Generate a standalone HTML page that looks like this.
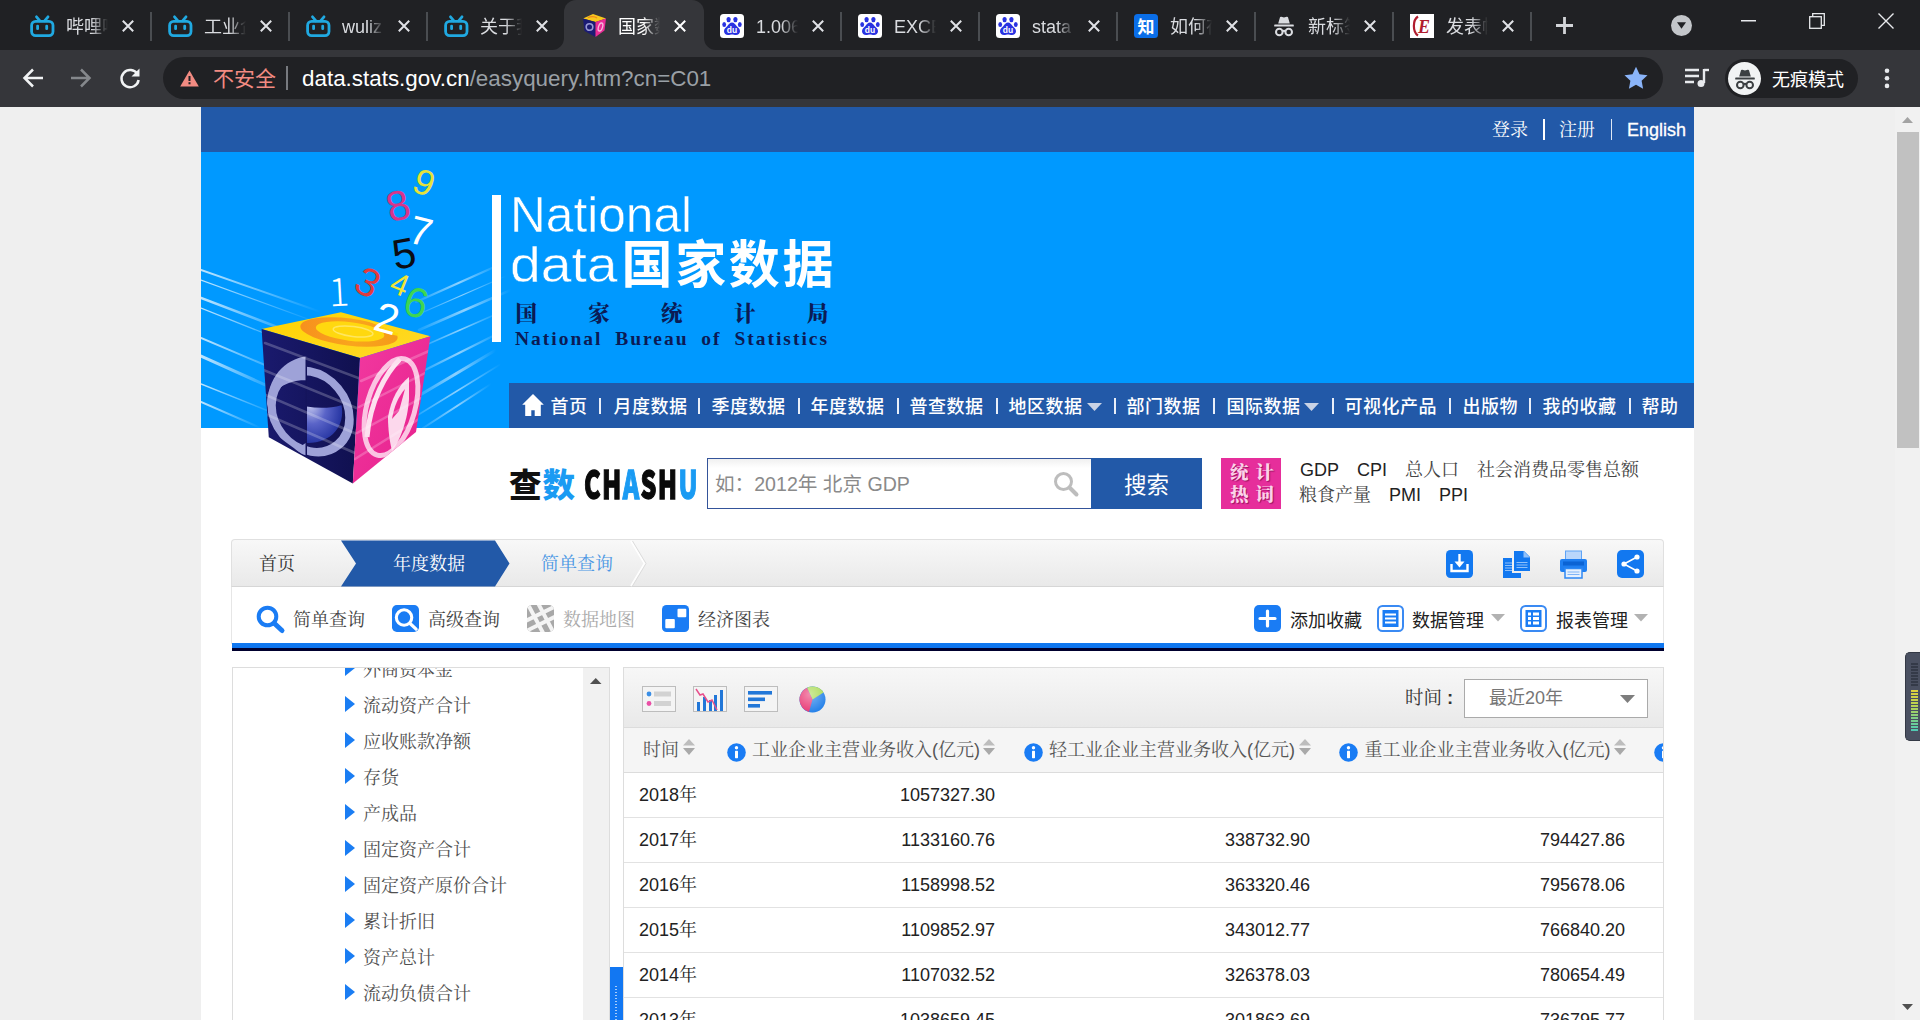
<!DOCTYPE html>
<html lang="zh-CN">
<head>
<meta charset="utf-8">
<title>国家数据</title>
<style>
*{box-sizing:border-box;margin:0;padding:0}
html,body{width:1920px;height:1020px;overflow:hidden;background:#efefef}
body{position:relative;font-family:"Liberation Sans","Noto Serif CJK SC",serif;font-size:18px;color:#333}
.abs{position:absolute}
.sans{font-family:"Liberation Sans","Noto Sans CJK SC",sans-serif}
.serif{font-family:"Liberation Sans","Noto Serif CJK SC",serif}
svg{position:absolute;overflow:visible}
span,div{white-space:nowrap}
i{font-style:normal}

/* ---------- browser chrome ---------- */
#tabstrip{left:0;top:0;width:1920px;height:50px;background:#202124}
#toolbar{left:0;top:50px;width:1920px;height:57px;background:#35363a}
.tab{position:absolute;top:0;height:50px;width:138px}
.tab .ttl{position:absolute;left:53px;top:13px;height:28px;width:42px;overflow:hidden;font:18px/28px "Liberation Sans","Noto Sans CJK SC",sans-serif;color:#dadce0;
  -webkit-mask-image:linear-gradient(90deg,#000 60%,transparent 100%);mask-image:linear-gradient(90deg,#000 60%,transparent 100%)}
.tab .sep{position:absolute;left:137px;top:12px;width:2px;height:29px;background:#4a4d51}
.tab svg.x{left:109px;top:20px}
.tab svg.fav{left:17px;top:14.500px}
#activetab{position:absolute;left:564px;top:0;width:140px;height:50px;background:#35363a;border-radius:12px 12px 0 0}
#omni{left:163px;top:57px;width:1500px;height:42px;border-radius:21px;background:#202124}
#incog{left:1725px;top:59px;width:133px;height:39px;border-radius:20px;background:#202124}

/* ---------- page ---------- */
#page{left:201px;top:107px;width:1493px;height:913px;background:#fff;overflow:hidden}
#topbar{left:0;top:0;width:1493px;height:45px;background:#2259a8;color:#fff}
#banner{left:0;top:45px;width:1493px;height:276px;background:#0099ff;overflow:hidden}
#nav{left:308px;top:276px;width:1185px;height:45px;background:#2259a8}
#nav span{position:absolute;top:2px;font:500 18px/45px "Liberation Sans","Noto Sans CJK SC",sans-serif;color:#fff;letter-spacing:.5px;margin-left:-.5px}
#nav i{position:absolute;top:15px;width:2px;height:16px;background:#e8eef8;margin-left:.7px}
.hot span{position:absolute;font-size:18px;line-height:24px}
.tb span{position:absolute;top:0;line-height:56px;font-size:18px;color:#444}
.tree .it{position:absolute;font-size:18px;line-height:36px;color:#505050;height:36px}
.tree .it:before{content:"";position:absolute;left:-18px;top:8.500px;border-left:10px solid #1a7df3;border-top:8px solid transparent;border-bottom:8px solid transparent}
.th{position:absolute;top:0;font-size:18px;line-height:45px;color:#555}
.row{position:absolute;left:0;width:1040px;height:45px;border-bottom:1px solid #e2e2e2;font:18px/45px "Liberation Sans","Noto Serif CJK SC",serif;color:#222}
.row span{position:absolute;top:0}
.row .c0{left:15px}
.row .c1{right:669px}
.row .c2{right:354px}
.row .c3{right:39px}
</style>
</head>
<body>
<!-- ================= BROWSER CHROME ================= -->
<div id="tabstrip" class="abs">
<div id="activetab"></div>
<svg style="left:552px;top:38px" width="12" height="12"><path d="M12 0v12H0A12 12 0 0 0 12 0z" fill="#35363a"/></svg>
<svg style="left:704px;top:38px" width="12" height="12"><path d="M0 0v12h12A12 12 0 0 1 0 0z" fill="#35363a"/></svg>
<div class="tab" style="left:13px"><svg class="fav" width="25" height="24" viewBox="0 0 25 24"><g fill="none" stroke="#20a9e1" stroke-width="2.8" stroke-linecap="round" stroke-linejoin="round"><rect x="1.600" y="6.400" width="21.400" height="14.200" rx="4"/><path d="M6.500 1.800l3.400 4M18 1.800l-3.400 4"/></g><g fill="#20a9e1"><rect x="6.200" y="9.800" width="2.800" height="5.200" rx="1.300"/><rect x="15.300" y="9.800" width="2.800" height="5.200" rx="1.300"/></g></svg><div class="ttl">哔哩哔哩</div><svg class="x" width="12" height="12" viewBox="0 0 12 12"><path d="M.8.800l10.400 10.400M11.200.800L.8 11.200" stroke="#e0e2e6" stroke-width="2" fill="none"/></svg><div class="sep"></div></div>
<div class="tab" style="left:151px"><svg class="fav" width="25" height="24" viewBox="0 0 25 24"><g fill="none" stroke="#20a9e1" stroke-width="2.8" stroke-linecap="round" stroke-linejoin="round"><rect x="1.600" y="6.400" width="21.400" height="14.200" rx="4"/><path d="M6.500 1.800l3.400 4M18 1.800l-3.400 4"/></g><g fill="#20a9e1"><rect x="6.200" y="9.800" width="2.800" height="5.200" rx="1.300"/><rect x="15.300" y="9.800" width="2.800" height="5.200" rx="1.300"/></g></svg><div class="ttl">工业企业</div><svg class="x" width="12" height="12" viewBox="0 0 12 12"><path d="M.8.800l10.400 10.400M11.200.800L.8 11.200" stroke="#e0e2e6" stroke-width="2" fill="none"/></svg><div class="sep"></div></div>
<div class="tab" style="left:289px"><svg class="fav" width="25" height="24" viewBox="0 0 25 24"><g fill="none" stroke="#20a9e1" stroke-width="2.8" stroke-linecap="round" stroke-linejoin="round"><rect x="1.600" y="6.400" width="21.400" height="14.200" rx="4"/><path d="M6.500 1.800l3.400 4M18 1.800l-3.400 4"/></g><g fill="#20a9e1"><rect x="6.200" y="9.800" width="2.800" height="5.200" rx="1.300"/><rect x="15.300" y="9.800" width="2.800" height="5.200" rx="1.300"/></g></svg><div class="ttl">wuliz</div><svg class="x" width="12" height="12" viewBox="0 0 12 12"><path d="M.8.800l10.400 10.400M11.200.800L.8 11.200" stroke="#e0e2e6" stroke-width="2" fill="none"/></svg><div class="sep"></div></div>
<div class="tab" style="left:427px"><svg class="fav" width="25" height="24" viewBox="0 0 25 24"><g fill="none" stroke="#20a9e1" stroke-width="2.8" stroke-linecap="round" stroke-linejoin="round"><rect x="1.600" y="6.400" width="21.400" height="14.200" rx="4"/><path d="M6.500 1.800l3.400 4M18 1.800l-3.400 4"/></g><g fill="#20a9e1"><rect x="6.200" y="9.800" width="2.800" height="5.200" rx="1.300"/><rect x="15.300" y="9.800" width="2.800" height="5.200" rx="1.300"/></g></svg><div class="ttl">关于我</div><svg class="x" width="12" height="12" viewBox="0 0 12 12"><path d="M.8.800l10.400 10.400M11.200.800L.8 11.200" stroke="#e0e2e6" stroke-width="2" fill="none"/></svg></div>
<div class="tab" style="left:565px"><svg class="fav" style="left:17px;top:13px" width="25" height="25" viewBox="0 0 25 25"><path d="M1 5.500L11 1l13 4.500L13.500 9z" fill="#f7c81e"/><path d="M1 5.500l12.500 3.500v15L2.500 18z" fill="#1b1b74"/><path d="M13.500 9L24 5.500l-1.500 12-9 6.500z" fill="#e92b97"/><circle cx="7.500" cy="14" r="3.300" fill="none" stroke="#9a9ad6" stroke-width="1.600"/><ellipse cx="18.500" cy="14" rx="2" ry="4.200" fill="none" stroke="#f8b6dc" stroke-width="1.400" transform="rotate(18 18.500 14)"/><path d="M6 4.800c2-1.500 7-1.500 9 .3" stroke="#f08a1c" stroke-width="1.300" fill="none"/></svg><div class="ttl" style="color:#fff">国家数据</div><svg class="x" width="12" height="12" viewBox="0 0 12 12"><path d="M.8.800l10.400 10.400M11.200.800L.8 11.200" stroke="#ffffff" stroke-width="2" fill="none"/></svg></div>
<div class="tab" style="left:703px"><svg class="fav" style="left:17px;top:14px" width="24" height="24" viewBox="0 0 24 24"><rect width="24" height="24" rx="3.5" fill="#fff"/><g fill="#2932e1"><ellipse cx="8.6" cy="5.6" rx="2.1" ry="2.7"/><ellipse cx="15.4" cy="5.6" rx="2.1" ry="2.7"/><ellipse cx="4.2" cy="10.4" rx="1.9" ry="2.5"/><ellipse cx="19.8" cy="10.4" rx="1.9" ry="2.5"/><path d="M12 8.6c2.2 0 3.2 2 4.8 3.6 1.8 1.8 3.2 2.8 3.2 5 0 2.4-1.8 3.8-4 3.8-1.6 0-2.6-.5-4-.5s-2.400.5-4 .5c-2.200 0-4-1.400-4-3.800 0-2.200 1.400-3.200 3.200-5 1.600-1.600 2.600-3.600 4.800-3.600z"/></g><text x="12" y="19.3" font-family="Liberation Sans,sans-serif" font-weight="bold" font-size="8.5" text-anchor="middle" fill="#fff">du</text></svg><div class="ttl">1.0066</div><svg class="x" width="12" height="12" viewBox="0 0 12 12"><path d="M.8.800l10.400 10.400M11.200.800L.8 11.200" stroke="#e0e2e6" stroke-width="2" fill="none"/></svg><div class="sep"></div></div>
<div class="tab" style="left:841px"><svg class="fav" style="left:17px;top:14px" width="24" height="24" viewBox="0 0 24 24"><rect width="24" height="24" rx="3.5" fill="#fff"/><g fill="#2932e1"><ellipse cx="8.6" cy="5.6" rx="2.1" ry="2.7"/><ellipse cx="15.4" cy="5.6" rx="2.1" ry="2.7"/><ellipse cx="4.2" cy="10.4" rx="1.9" ry="2.5"/><ellipse cx="19.8" cy="10.4" rx="1.9" ry="2.5"/><path d="M12 8.6c2.2 0 3.2 2 4.8 3.6 1.8 1.8 3.2 2.8 3.2 5 0 2.4-1.8 3.8-4 3.8-1.6 0-2.6-.5-4-.5s-2.400.5-4 .5c-2.200 0-4-1.400-4-3.800 0-2.200 1.400-3.200 3.200-5 1.600-1.600 2.600-3.600 4.800-3.600z"/></g><text x="12" y="19.3" font-family="Liberation Sans,sans-serif" font-weight="bold" font-size="8.5" text-anchor="middle" fill="#fff">du</text></svg><div class="ttl">EXCEL</div><svg class="x" width="12" height="12" viewBox="0 0 12 12"><path d="M.8.800l10.400 10.400M11.200.800L.8 11.200" stroke="#e0e2e6" stroke-width="2" fill="none"/></svg><div class="sep"></div></div>
<div class="tab" style="left:979px"><svg class="fav" style="left:17px;top:14px" width="24" height="24" viewBox="0 0 24 24"><rect width="24" height="24" rx="3.5" fill="#fff"/><g fill="#2932e1"><ellipse cx="8.6" cy="5.6" rx="2.1" ry="2.7"/><ellipse cx="15.4" cy="5.6" rx="2.1" ry="2.7"/><ellipse cx="4.2" cy="10.4" rx="1.9" ry="2.5"/><ellipse cx="19.8" cy="10.4" rx="1.9" ry="2.5"/><path d="M12 8.6c2.2 0 3.2 2 4.8 3.6 1.8 1.8 3.2 2.8 3.2 5 0 2.4-1.8 3.8-4 3.8-1.6 0-2.6-.5-4-.5s-2.400.5-4 .5c-2.200 0-4-1.400-4-3.800 0-2.200 1.400-3.200 3.200-5 1.600-1.600 2.600-3.600 4.800-3.600z"/></g><text x="12" y="19.3" font-family="Liberation Sans,sans-serif" font-weight="bold" font-size="8.5" text-anchor="middle" fill="#fff">du</text></svg><div class="ttl">stata</div><svg class="x" width="12" height="12" viewBox="0 0 12 12"><path d="M.8.800l10.400 10.400M11.200.800L.8 11.200" stroke="#e0e2e6" stroke-width="2" fill="none"/></svg><div class="sep"></div></div>
<div class="tab" style="left:1117px"><svg class="fav" style="left:17px;top:14px" width="24" height="24" viewBox="0 0 24 24"><rect width="24" height="24" rx="3.5" fill="#0a6ee8"/><text x="12" y="18.6" font-family="Liberation Sans,Noto Sans CJK SC,sans-serif" font-weight="bold" font-size="17" text-anchor="middle" fill="#fff">知</text></svg><div class="ttl">如何在</div><svg class="x" width="12" height="12" viewBox="0 0 12 12"><path d="M.8.800l10.400 10.400M11.200.800L.8 11.200" stroke="#e0e2e6" stroke-width="2" fill="none"/></svg><div class="sep"></div></div>
<div class="tab" style="left:1255px"><svg class="fav" style="left:16px;top:14px" width="26" height="24" viewBox="0 0 26 24"><g fill="#dadce0"><path d="M7.200 9.500l1.800-6.200c.2-.6.700-.8 1.300-.6l2.700.9 2.700-.9c.6-.2 1.100 0 1.300.6l1.800 6.200z"/><rect x="3.200" y="10.400" width="19.600" height="2.200" rx=".6"/></g><g fill="none" stroke="#dadce0" stroke-width="2"><circle cx="8.300" cy="18" r="3.300"/><circle cx="17.700" cy="18" r="3.300"/><path d="M11.500 17.400c1-.8 2-.8 3 0"/></g></svg><div class="ttl">新标签页</div><svg class="x" width="12" height="12" viewBox="0 0 12 12"><path d="M.8.800l10.400 10.400M11.200.800L.8 11.200" stroke="#e0e2e6" stroke-width="2" fill="none"/></svg><div class="sep"></div></div>
<div class="tab" style="left:1393px"><svg class="fav" style="left:17px;top:14px" width="24" height="24" viewBox="0 0 24 24"><rect width="24" height="24" fill="#fff"/><path d="M8 2.500C2.500 6 2.500 18 8 21.500" fill="none" stroke="#b01c2e" stroke-width="2.200"/><text x="14" y="18.500" font-family="Liberation Serif,serif" font-style="italic" font-weight="bold" font-size="18" text-anchor="middle" fill="#b01c2e">E</text></svg><div class="ttl">发表帖子</div><svg class="x" width="12" height="12" viewBox="0 0 12 12"><path d="M.8.800l10.400 10.400M11.200.800L.8 11.200" stroke="#e0e2e6" stroke-width="2" fill="none"/></svg><div class="sep"></div></div>
<svg style="left:1555px;top:16px" width="19" height="19" viewBox="0 0 19 19"><path d="M9.500 1v17M1 9.500h17" stroke="#d2d4d8" stroke-width="2.800" fill="none"/></svg>
<svg style="left:1671px;top:15px" width="21" height="21" viewBox="0 0 21 21"><circle cx="10.500" cy="10.500" r="10.500" fill="#c3c6ca"/><path d="M6 7.300h9l-4.500 6.400z" fill="#202124"/></svg>
<svg style="left:1741px;top:20px" width="15" height="2"><rect width="15" height="1.500" fill="#e8eaed"/></svg>
<svg style="left:1809px;top:13px" width="16" height="16" viewBox="0 0 16 16"><g fill="none" stroke="#e8eaed" stroke-width="1.300"><rect x=".7" y="3.700" width="11.600" height="11.600"/><path d="M3.700 3.700V.7h11.600v11.600h-3"/></g></svg>
<svg style="left:1878px;top:13px" width="16" height="16" viewBox="0 0 16 16"><path d="M.5.500l15 15M15.500.500l-15 15" stroke="#e8eaed" stroke-width="1.400" fill="none"/></svg>
</div>
<div id="toolbar" class="abs">
<svg style="left:22px;top:17px" width="22" height="22" viewBox="0 0 22 22"><path d="M21 11H3M11 2.500L2.500 11l8.500 8.500" stroke="#f1f3f4" stroke-width="2.500" fill="none"/></svg>
<svg style="left:70px;top:17px" width="22" height="22" viewBox="0 0 22 22"><path d="M1 11h18M11 2.500l8.500 8.500-8.500 8.500" stroke="#85888c" stroke-width="2.500" fill="none"/></svg>
<svg style="left:118px;top:16px" width="24" height="24" viewBox="0 0 24 24"><path d="M19.500 8.200A8.600 8.600 0 1 0 20.600 14" stroke="#f1f3f4" stroke-width="2.500" fill="none"/><path d="M21.500 2.500v8h-8z" fill="#f1f3f4"/></svg>
</div>
<div id="omni" class="abs">
<svg style="left:17px;top:13px" width="19" height="17" viewBox="0 0 19 17"><path d="M9.500.500L18.800 16.500H.2z" fill="#f28b82"/><rect x="8.500" y="6" width="2" height="5" fill="#202124"/><rect x="8.500" y="12.200" width="2" height="2.100" fill="#202124"/></svg>
<span class="abs sans" style="left:50px;top:1px;font-size:21px;line-height:41px;color:#f28b82">不安全</span>
<div class="abs" style="left:123px;top:9px;width:2px;height:24px;background:#777a7f"></div>
<span class="abs sans" style="left:139px;top:.500px;font-size:22.400px;line-height:41px;color:#fff">data.stats.gov.cn<i style="color:#9aa0a6">/easyquery.htm?cn=C01</i></span>
<svg style="left:1461px;top:9px" width="24" height="23" viewBox="0 0 24 23"><path d="M12 .8l3.500 7.400 8 1-5.900 5.500 1.500 8L12 18.800 4.900 22.700l1.500-8L.5 9.200l8-1z" fill="#8ab4f8"/></svg>
</div>
<svg style="left:1685px;top:67px" width="24" height="22" viewBox="0 0 24 22"><g stroke="#e8eaed" stroke-width="2.400" fill="none"><path d="M0 3h14M0 9h14M0 15h9"/><path d="M19 2v14"/><path d="M19 3h5"/></g><circle cx="16" cy="16.500" r="3.500" fill="#e8eaed"/></svg>
<div id="incog" class="abs"><div class="abs" style="left:3px;top:3px;width:33px;height:33px;border-radius:50%;background:#f1f3f4"></div>
<svg style="left:6.500px;top:7.500px" width="26" height="24" viewBox="0 0 26 24"><g fill="#3c4043"><path d="M7.200 9.500l1.800-6.200c.2-.6.700-.8 1.300-.6l2.700.9 2.700-.9c.6-.2 1.100 0 1.300.6l1.800 6.200z"/><rect x="3.200" y="10.400" width="19.600" height="2.200" rx=".6"/></g><g fill="none" stroke="#3c4043" stroke-width="2"><circle cx="8.300" cy="18" r="3.300"/><circle cx="17.700" cy="18" r="3.300"/><path d="M11.500 17.400c1-.8 2-.8 3 0"/></g></svg>
<span class="abs sans" style="left:47px;top:2px;font-size:18px;line-height:39px;color:#fff">无痕模式</span></div>
<svg style="left:1884px;top:68px" width="6" height="21" viewBox="0 0 6 21"><g fill="#e8eaed"><circle cx="3" cy="2.700" r="2.300"/><circle cx="3" cy="10.300" r="2.300"/><circle cx="3" cy="17.900" r="2.300"/></g></svg>
<!-- ================= PAGE ================= -->
<div id="page" class="abs">
  <div id="topbar" class="abs serif">
    <span class="abs" style="left:1291px;top:.500px;line-height:45px">登录</span>
    <div class="abs" style="left:1342px;top:12px;width:2px;height:21px;background:#fff"></div>
    <span class="abs" style="left:1358px;top:.500px;line-height:45px">注册</span>
    <div class="abs" style="left:1410px;top:12px;width:1px;height:21px;background:#dfe8f5"></div>
    <span class="abs" style="left:1426px;top:.500px;line-height:45px;-webkit-text-stroke:.3px #fff">English</span>
  </div>

  <div id="banner" class="abs">
    <!-- light streaks -->
    <svg style="left:0;top:0" width="640" height="276" viewBox="0 0 640 276">
      <defs>
        <linearGradient id="sl" x1="0" y1="0" x2="1" y2="0"><stop offset="0" stop-color="#fff" stop-opacity=".75"/><stop offset="1" stop-color="#fff" stop-opacity="0"/></linearGradient>
        <linearGradient id="sr" x1="1" y1="0" x2="0" y2="0"><stop offset="0" stop-color="#fff" stop-opacity="0"/><stop offset=".5" stop-color="#fff" stop-opacity=".55"/><stop offset="1" stop-color="#fff" stop-opacity=".1"/></linearGradient>
      </defs>
      <g fill="none" stroke="url(#sl)" stroke-linecap="round">
        <path d="M0 118L120 160" stroke-width="2"/>
        <path d="M0 128L115 170" stroke-width="1.200"/>
        <path d="M0 146L105 186" stroke-width="2.500"/>
        <path d="M0 156L100 196" stroke-width="1.200"/>
        <path d="M0 186L90 224" stroke-width="2"/>
        <path d="M0 204L80 240" stroke-width="3"/>
        <path d="M0 232L75 262" stroke-width="1.500"/>
        <path d="M0 250L60 276" stroke-width="2"/>
      </g>
      <g fill="none" stroke="url(#sr)" stroke-linecap="round">
        <path d="M215 150L300 112" stroke-width="2"/>
        <path d="M218 162L305 124" stroke-width="1.200"/>
        <path d="M218 178L310 138" stroke-width="2.500"/>
        <path d="M218 196L300 160" stroke-width="1.500"/>
        <path d="M216 222L300 180" stroke-width="2"/>
        <path d="M214 246L295 198" stroke-width="3"/>
        <path d="M212 266L300 212" stroke-width="1.500"/>
        <path d="M222 276L290 232" stroke-width="2"/>
      </g>
    </svg>
    <!-- title -->
    <div class="abs" style="left:291px;top:43px;width:9px;height:147px;background:#fff"></div>
    <svg style="left:0;top:0" width="700" height="276" viewBox="0 0 700 276">
      <g font-family="Liberation Sans, sans-serif" fill="#fff" stroke="#0099ff" stroke-width=".500">
        <text x="309" y="79.500" font-size="50.500" textLength="182" lengthAdjust="spacingAndGlyphs">National</text>
        <text x="309" y="130" font-size="50.500" textLength="107.500" lengthAdjust="spacingAndGlyphs">data</text>
      </g>
      <text x="420.500" y="131" font-family="Liberation Sans, Noto Sans CJK SC, sans-serif" font-weight="bold" font-size="51" fill="#fff" textLength="212" lengthAdjust="spacing">国家数据</text>
      <text x="314.500" y="169" font-family="Liberation Serif, Noto Serif CJK SC, serif" font-weight="900" font-size="21.500" fill="#0b1b55" letter-spacing="51.300">国家统计局</text>
      <text x="314" y="192.500" font-family="Liberation Serif, serif" font-weight="bold" font-size="19.500" fill="#0b1b55" textLength="312" lengthAdjust="spacing" word-spacing="6">National Bureau of Statistics</text>
    </svg>
  </div>

  <div id="nav" class="abs">
    <svg style="left:13px;top:11px" width="22" height="22" viewBox="0 0 22 22"><path d="M11 0L.2 10.800h3V22h6.100v-5.800h3.400V22h6.100V10.800h3z" fill="#fff"/></svg>
    <span style="left:42px">首页</span><i style="left:89px"></i>
    <span style="left:105px">月度数据</span><i style="left:188px"></i>
    <span style="left:203px">季度数据</span><i style="left:288px"></i>
    <span style="left:302px">年度数据</span><i style="left:387px"></i>
    <span style="left:401px">普查数据</span><i style="left:486px"></i>
    <span style="left:500px">地区数据</span>
    <svg style="left:578px;top:20px" width="15" height="8"><path d="M0 0h15l-7.500 8z" fill="#c9d3e6"/></svg><i style="left:604px"></i>
    <span style="left:618px">部门数据</span><i style="left:703px"></i>
    <span style="left:718px">国际数据</span>
    <svg style="left:795px;top:20px" width="15" height="8"><path d="M0 0h15l-7.500 8z" fill="#c9d3e6"/></svg><i style="left:822px"></i>
    <span style="left:836px">可视化产品</span><i style="left:939px"></i>
    <span style="left:954px">出版物</span><i style="left:1019px"></i>
    <span style="left:1034px">我的收藏</span><i style="left:1119px"></i>
    <span style="left:1133px">帮助</span>
  </div>
  <!-- cube logo -->
  <svg style="left:0;top:45px" width="320" height="360" viewBox="0 45 320 360">
    <defs>
      <linearGradient id="gTop" x1="0" y1="0" x2="1" y2="1"><stop offset="0" stop-color="#ffd400"/><stop offset="1" stop-color="#ffd92a"/></linearGradient>
      <linearGradient id="gL" x1="0" y1="0" x2="1" y2="0"><stop offset="0" stop-color="#1a1a6e"/><stop offset="1" stop-color="#10104f"/></linearGradient>
      <linearGradient id="gR" x1="0" y1="0" x2="1" y2="1"><stop offset="0" stop-color="#f23aa0"/><stop offset="1" stop-color="#e61f8c"/></linearGradient>
      <linearGradient id="gRing" x1="0" y1="0" x2="1" y2="0"><stop offset="0" stop-color="#f7901e"/><stop offset=".55" stop-color="#f9a51c"/><stop offset="1" stop-color="#f59a1a"/></linearGradient>
      <radialGradient id="gPie" cx="0.1" cy="0.1" r="1"><stop offset="0" stop-color="#c9ccf0"/><stop offset=".45" stop-color="#5a64c8"/><stop offset="1" stop-color="#1a2a9a"/></radialGradient>
      <clipPath id="cL"><path d="M60.600 222.100L159 251l-7.200 125.500L67.800 330.200z"/></clipPath>
      <clipPath id="cR"><path d="M159 251l70.400-21.700L215 325l-63.200 51.500z"/></clipPath>
      <clipPath id="cT"><path d="M60.600 222.100l79.300-16.900 89.500 24.100L159 251z"/></clipPath>
    </defs>
    <!-- top face -->
    <path d="M60.600 222.100l79.300-16.900 89.500 24.100L159 251z" fill="url(#gTop)"/>
    <g clip-path="url(#cT)" transform="rotate(7 148 225)">
      <ellipse cx="148" cy="225" rx="49" ry="13.500" fill="url(#gRing)"/>
      <ellipse cx="149" cy="224.300" rx="34.500" ry="9.300" fill="#ffd80f"/>
      <ellipse cx="152" cy="224" rx="20" ry="5" fill="none" stroke="#ffe869" stroke-width="1.500" opacity=".9"/>
      <path d="M178 214l22 2-4 7-16-2z" fill="#ffd60a"/>
    </g>
    <!-- left face -->
    <path d="M60.600 222.100L159 251l-7.200 125.500L67.800 330.200z" fill="url(#gL)"/>
    <g clip-path="url(#cL)" transform="matrix(1 .18 0 1 0 -19.600)">
      <ellipse cx="109.500" cy="304.500" rx="39" ry="40" fill="none" stroke="#9ea2d8" stroke-width="8.500"/>
      <path d="M105.500 250C84 256 66 278 66 308c5-18 19-31 39.500-34z" fill="#9ea2d8"/>
      <path d="M105.500 300c12 0 24-2.500 35-7.500 4 20-10 40-35 44z" fill="url(#gPie)"/>
      <path d="M105.500 336v13c-3 0-8-1-12-3z" fill="#9ea2d8"/>
      <rect x="104.500" y="250" width="1.500" height="100" fill="#14145c"/>
    </g>
    <!-- right face -->
    <path d="M159 251l70.400-21.700L215 325l-63.200 51.500z" fill="url(#gR)"/>
    <g clip-path="url(#cR)" fill="none">
      <ellipse cx="190" cy="300" rx="24" ry="50" stroke="#fbc4e2" stroke-width="5" transform="rotate(16 190 300)"/>
      <path d="M199 252c-14 14-30 42-33 78" stroke="#fde0ef" stroke-width="5"/>
      <path d="M208 270c-10 8-18 22-21 40 0 14 2 26 4 34 8-10 16-32 17-52z" fill="#fde7f3" stroke="none" opacity=".92"/>
      <path d="M204 282c-7 8-11 18-13 30l7-8z" fill="#ee2d96" stroke="none"/>
    </g>
    <!-- streaks over cube -->
    <g fill="none" stroke="#fff" stroke-linecap="round" opacity=".22">
      <g clip-path="url(#cL)"><path d="M60 262l98 40M60 286l98 42M62 306l92 40M64 236l96 36" stroke-width="2.500"/></g>
      <g clip-path="url(#cR)"><path d="M158 300l70-36M156 326l66-36M154 352l64-40M160 274l68-30" stroke-width="2.500"/></g>
    </g>
    <!-- numbers -->
    <g font-family="Liberation Sans, sans-serif" text-anchor="middle">
      <g>
        <text x="223" y="88" font-size="36" fill="#e6e23a" transform="rotate(22 223 76)">9</text>
        <text x="197" y="113" font-size="42" fill="#d8348a" transform="rotate(-14 197 98)">8</text>
        <text x="220" y="138" font-size="40" fill="#fff" transform="rotate(14 220 124)">7</text>
        <text x="203" y="161" font-size="42" fill="#0c0c14" transform="rotate(-10 203 146)">5</text>
        <text x="167" y="189" font-size="40" fill="#e23a3e" transform="rotate(28 167 175)">3</text>
        <text x="199" y="188" font-size="31" fill="#f2e534" transform="rotate(22 199 177)">4</text>
        <text x="138" y="199" font-size="38" font-family="Noto Sans CJK SC, sans-serif" font-weight="300" fill="#fff" transform="rotate(-3 138 185)">1</text>
        <text x="215" y="210" font-size="42" fill="#3fd552" transform="rotate(16 215 196)">6</text>
      </g>
      <text x="186" y="226" font-size="42" fill="#fff" transform="rotate(16 186 211)">2</text>
    </g>
  </svg>
  <!-- search row -->
  <div class="abs sans" style="left:308px;top:356px;font-size:32.500px;line-height:46px;font-weight:900;color:#111;letter-spacing:1px">查<i style="color:#1a9bf3">数</i></div>
  <div class="abs" style="left:383px;top:359.500px;font:900 25px/30px 'Noto Sans CJK SC',sans-serif;color:#0a0a0a;transform-origin:0 50%;transform:scale(1,1.58);letter-spacing:1.300px;-webkit-text-stroke:.8px">CH<i style="color:#1a9bf3">A</i>SH<i style="color:#1a9bf3">U</i></div>
  <div class="abs" style="left:506px;top:351px;width:386px;height:51px;border:1px solid #34549a;background:linear-gradient(#f0f0f0,#fff 9px)"></div>
  <span class="abs sans" style="left:514px;top:352px;font-size:19.600px;line-height:50px;color:#8a8a8a">如：2012年 北京 GDP</span>
  <svg style="left:852px;top:364px" width="26" height="26" viewBox="0 0 26 26"><g fill="none" stroke="#bdbdbd" stroke-linecap="round"><circle cx="10.500" cy="10.500" r="8" stroke-width="3"/><path d="M17 17l6.500 6.500" stroke-width="4"/></g></svg>
  <div class="abs sans" style="left:890px;top:351px;width:111px;height:51px;background:#2259a8;color:#fff;font-size:22.500px;line-height:56px;text-align:center">搜索</div>
  <div class="abs" style="left:1020px;top:351px;width:60px;height:51px;background:#e62e9b"></div>
  <div class="abs serif" style="left:1029px;top:355px;font-size:18.500px;line-height:22px;font-weight:900;color:#fbd3ea;letter-spacing:7px;text-shadow:1px 1px 1px rgba(90,0,50,.55)">统计<br>热词</div>
  <div class="hot serif">
    <span style="left:1099px;top:351px;color:#222">GDP</span>
    <span style="left:1156px;top:351px;color:#222">CPI</span>
    <span style="left:1204px;top:351px;color:#444">总人口</span>
    <span style="left:1276px;top:351px;color:#444">社会消费品零售总额</span>
    <span style="left:1098px;top:376px;color:#444">粮食产量</span>
    <span style="left:1188px;top:376px;color:#222">PMI</span>
    <span style="left:1238px;top:376px;color:#222">PPI</span>
  </div>

  <!-- breadcrumb -->
  <div class="abs" style="left:30px;top:432px;width:1433px;height:48px;border:1px solid #e0e0e0;border-bottom-color:#d6d6d6;border-radius:4px 4px 0 0;background:linear-gradient(#f8f8f8,#e9e9e9)"></div>
  <svg style="left:140px;top:433px" width="320" height="47" viewBox="0 0 320 47">
    <path d="M0 .5h154l14.500 23-14.500 23H0l15-23z" fill="#2259a8"/>
    <path d="M290 1l13.500 22.500L290 46" fill="none" stroke="#fff" stroke-width="2" opacity=".9"/>
    <path d="M291.500 1l13.500 22.500L291.500 46" fill="none" stroke="#dcdcdc" stroke-width="1"/>
  </svg>
  <span class="abs serif" style="left:58px;top:434px;line-height:46px;color:#333">首页</span>
  <span class="abs serif" style="left:192px;top:434px;line-height:46px;color:#fff">年度数据</span>
  <span class="abs serif" style="left:340px;top:434px;line-height:46px;color:#4b97e4">简单查询</span>
  <!-- action icons -->
  <svg style="left:1245px;top:443px" width="27" height="28" viewBox="0 0 27 28"><rect width="27" height="28" rx="4.500" fill="#1278f0"/><g fill="none" stroke="#fff" stroke-width="2.400"><path d="M5.500 14v7h16v-7"/><path d="M13.500 4v11"/></g><path d="M8.500 11.500h10l-5 6z" fill="#fff"/></svg>
  <svg style="left:1302px;top:444px" width="27" height="27" viewBox="0 0 27 27"><g fill="#1278f0"><path d="M0 7h9v15h9v5H0z"/><path d="M11 0h10l6 6v14H11z"/></g><path d="M20.500 0v6.500H27" fill="#8fc0fa"/><g stroke="#8fc0fa" stroke-width="1.200"><path d="M13.500 11.500h11M13.500 14h11M13.500 16.500h11M2 12h7M2 14.500h7M2 17h7M2 19.500h7"/></g></svg>
  <svg style="left:1359px;top:444px" width="27" height="27" viewBox="0 0 27 27"><rect x="5.500" y="0" width="16" height="9" fill="#b9d6fb" stroke="#5ea3f6" stroke-width="1"/><rect x="0" y="8" width="27" height="13" rx="2" fill="#1f7ff1"/><rect x="3" y="10.500" width="21" height="4" fill="#0b63d4"/><rect x="5" y="17.500" width="17" height="9.500" fill="#e6f0fd" stroke="#2f88f3" stroke-width="1.500"/><path d="M7.500 21h12M7.500 23.500h12" stroke="#7fb4f7" stroke-width="1"/></svg>
  <svg style="left:1416px;top:443px" width="27" height="28" viewBox="0 0 27 28"><rect width="27" height="28" rx="5" fill="#1278f0"/><path d="M20 7L7 14l13 7" fill="none" stroke="#fff" stroke-width="1.600"/><g fill="#fff"><circle cx="20" cy="7" r="2.600"/><circle cx="7" cy="14" r="2.600"/><circle cx="20" cy="21" r="2.600"/></g></svg>

  <!-- query toolbar -->
  <div class="abs" style="left:30px;top:480px;width:1433px;height:57px;border-left:1px solid #e6e6e6;border-right:1px solid #e6e6e6"></div>
  <div class="tb serif abs" style="left:30px;top:484.500px;width:1433px;height:56px">
    <svg style="left:25px;top:13.500px" width="29" height="28" viewBox="0 0 29 28"><g fill="none" stroke="#1a7cf4" stroke-linecap="round"><circle cx="11.500" cy="11.500" r="8.800" stroke-width="4"/><path d="M18.500 18.500l7.500 7" stroke-width="5"/></g></svg>
    <span style="left:62px">简单查询</span>
    <svg style="left:161px;top:13.500px" width="27" height="27" viewBox="0 0 28 28"><rect width="28" height="28" rx="5" fill="#1a7cf4"/><g fill="none" stroke="#fff" stroke-linecap="round"><circle cx="12.500" cy="13" r="8" stroke-width="3.200"/><path d="M19 19.500l6 5.500" stroke-width="3.400"/></g></svg>
    <span style="left:197px">高级查询</span>
    <svg style="left:296px;top:13.500px" width="27" height="27" viewBox="0 0 27 28" preserveAspectRatio="none"><defs><clipPath id="mapc"><rect width="27" height="28" rx="5"/></clipPath></defs><rect width="27" height="28" rx="5" fill="#a8a8a8"/><g clip-path="url(#mapc)"><g stroke="#f4f4f4" stroke-width="4" fill="none" transform="rotate(-27 13.500 14)"><path d="M9 -8v44M18.500 -8v44M-8 9.500h44M-8 19h44"/></g></g></svg>
    <span style="left:332px;color:#aaa">数据地图</span>
    <svg style="left:431px;top:13.500px" width="27" height="27" viewBox="0 0 27 28" preserveAspectRatio="none"><rect width="27" height="28" rx="4.500" fill="#1a7cf4"/><rect x="15.500" y="3.800" width="8.800" height="8.800" rx="1" fill="#fff"/><rect x="3.300" y="14.500" width="9.500" height="9.500" rx="1" fill="#fff"/></svg>
    <span style="left:467px">经济图表</span>

    <svg style="left:1023px;top:13.500px" width="27" height="27" viewBox="0 0 27 27"><rect width="27" height="27" rx="5" fill="#1a7cf4"/><path d="M13.500 6v15M6 13.500h15" stroke="#fff" stroke-width="3.200" stroke-linecap="round"/></svg>
    <span class="sans" style="top:1px;left:1059px;color:#222">添加收藏</span>
    <svg style="left:1146px;top:13.500px" width="27" height="27" viewBox="0 0 27 27"><rect x="1" y="1" width="25" height="25" rx="4.500" fill="#fff" stroke="#3a8af3" stroke-width="2"/><rect x="5.500" y="5" width="16" height="17" fill="#1a7cf4"/><path d="M8 9.500h11M8 13.500h11M8 17.500h11" stroke="#fff" stroke-width="2"/></svg>
    <span class="sans" style="top:1px;left:1181px;color:#222">数据管理</span>
    <svg style="left:1260px;top:22.500px" width="14" height="8"><path d="M0 0h14l-7 7.500z" fill="#b2b2b2"/></svg>
    <svg style="left:1289px;top:13.500px" width="27" height="27" viewBox="0 0 27 27"><rect x="1" y="1" width="25" height="25" rx="4.500" fill="#fff" stroke="#3a8af3" stroke-width="2"/><rect x="5.500" y="5" width="16" height="17" fill="#1a7cf4"/><g fill="#fff"><rect x="8" y="7.500" width="3" height="3"/><rect x="13" y="7.500" width="6" height="3"/><rect x="8" y="12" width="3" height="3"/><rect x="13" y="12" width="6" height="3"/><rect x="8" y="16.500" width="3" height="3"/><rect x="13" y="16.500" width="6" height="3"/></g></svg>
    <span class="sans" style="top:1px;left:1325px;color:#222">报表管理</span>
    <svg style="left:1403px;top:22.500px" width="14" height="8"><path d="M0 0h14l-7 7.500z" fill="#b2b2b2"/></svg>
  </div>
  <div class="abs" style="left:31px;top:536px;width:1432px;height:8px;background:linear-gradient(#1079f2 0,#0d74ee 5.500px,#00002e 5.500px,#00002e 100%)"></div>
  <!-- left tree panel -->
  <div class="abs tree serif" style="left:31px;top:560px;width:378px;height:353px;border:1px solid #ddd;border-bottom:0;overflow:hidden;background:#fff">
    <div class="it" style="left:130px;top:-16.5px">外商资本金</div>
    <div class="it" style="left:130px;top:19.5px">流动资产合计</div>
    <div class="it" style="left:130px;top:55.5px">应收账款净额</div>
    <div class="it" style="left:130px;top:91.5px">存货</div>
    <div class="it" style="left:130px;top:127.5px">产成品</div>
    <div class="it" style="left:130px;top:163.5px">固定资产合计</div>
    <div class="it" style="left:130px;top:199.5px">固定资产原价合计</div>
    <div class="it" style="left:130px;top:235.5px">累计折旧</div>
    <div class="it" style="left:130px;top:271.5px">资产总计</div>
    <div class="it" style="left:130px;top:307.5px">流动负债合计</div>
    <div class="it" style="left:130px;top:343.5px">长期负债合计</div>
    <div class="abs" style="left:350px;top:-1px;width:27px;height:354px;background:#f1f1f1;line-height:0"></div>
    <svg style="left:357px;top:10px" width="12" height="6"><path d="M0 6h11.500L5.750 0z" fill="#505050"/></svg>
  </div>
  <!-- splitter -->
  <div class="abs" style="left:409px;top:860px;width:13px;height:60px;background:#1277f2"></div>
  <div class="abs" style="left:414px;top:879px;width:2px;height:40px;background:repeating-linear-gradient(#a9cdfb 0 1px,transparent 1px 3px)"></div>
  <!-- right data panel -->
  <div class="abs serif" style="left:422px;top:560px;width:1041px;height:353px;border:1px solid #ddd;border-bottom:0;overflow:hidden;background:#fff">
    <div class="abs" style="left:0;top:0;width:1040px;height:60px;background:linear-gradient(#f7f7f7,#e9e9e9);border-bottom:1px solid #dcdcdc"></div>
    <svg style="left:18px;top:18px" width="34" height="26" viewBox="0 0 34 26"><rect x=".5" y=".5" width="33" height="25" fill="#f4f4f4" stroke="#bdbdbd"/><circle cx="7" cy="8" r="2.400" fill="#3a8ee6"/><circle cx="7" cy="17.500" r="2.400" fill="#ea4fa6"/><rect x="12" y="5.500" width="17" height="5" fill="#d2d2d2"/><rect x="12" y="15" width="17" height="5" fill="#d2d2d2"/></svg>
    <svg style="left:69px;top:18px" width="34" height="26" viewBox="0 0 34 26"><rect x=".5" y=".5" width="33" height="25" fill="#f4f4f4" stroke="#bdbdbd"/><g fill="#2277d8"><rect x="4" y="16" width="3" height="9"/><rect x="10" y="11" width="3" height="14"/><rect x="16" y="14" width="3" height="11"/><rect x="21" y="9" width="3" height="16"/><rect x="27" y="4" width="3" height="21"/></g><path d="M3 3l4 6 3-1 5 8 4-2 5 10" fill="none" stroke="#e8508c" stroke-width="1.500"/></svg>
    <svg style="left:120px;top:18px" width="34" height="26" viewBox="0 0 34 26"><rect x=".5" y=".5" width="33" height="25" fill="#f4f4f4" stroke="#bdbdbd"/><g fill="#2277d8"><rect x="4" y="5" width="24" height="3.600"/><rect x="4" y="11.500" width="17" height="3.600"/><rect x="4" y="18" width="12" height="3.600"/></g></svg>
    <svg style="left:175px;top:18px" width="27" height="27" viewBox="0 0 27 27"><defs><radialGradient id="pg" cx=".4" cy=".3" r=".8"><stop offset="0" stop-color="#fff" stop-opacity=".45"/><stop offset="1" stop-color="#fff" stop-opacity="0"/></radialGradient></defs><circle cx="13.500" cy="13.500" r="13" fill="#1a7be8"/><path d="M13.500 13.500L24.500 6.500A13 13 0 0 0 8 1.700z" fill="#a4d84a"/><path d="M13.500 13.500L8 1.700A13 13 0 0 0 10 26z" fill="#e8306e"/><circle cx="13.500" cy="13.500" r="13" fill="url(#pg)"/></svg>
    <span class="abs" style="left:781px;top:6px;line-height:48px;color:#333;font-size:18.500px">时间<i style="margin-left:5px;font-weight:bold">:</i></span>
    <div class="abs" style="left:840px;top:11px;width:184px;height:39px;border:1px solid #aaa;background:#fff"></div>
    <span class="abs sans" style="left:865px;top:11px;line-height:38px;color:#767676;font-size:18px">最近20年</span>
    <svg style="left:996px;top:27px" width="15" height="8"><path d="M0 0h15l-7.500 8z" fill="#7d7d7d"/></svg>
    <div class="abs" style="left:0;top:60px;width:1040px;height:45px;background:#f5f5f5;border-bottom:1px solid #dcdcdc">
      <span class="th" style="left:19px">时间</span><svg style="left:58.500px;top:11px" width="12" height="17" viewBox="0 0 12 17"><path d="M0 6.500h12L6 0z" fill="#bdbdbd"/><path d="M0 9h12L6 16z" fill="#a9a9a9"/></svg>
      <svg style="left:102.500px;top:15px" width="19" height="19" viewBox="0 0 19 19"><circle cx="9.500" cy="9.500" r="9.300" fill="#1a7cf4"/><circle cx="9.500" cy="4.800" r="1.700" fill="#fff"/><rect x="8" y="7.800" width="3" height="7.400" rx=".6" fill="#fff"/></svg><span class="th" style="left:128px">工业企业主营业务收入(亿元)</span><svg style="left:359px;top:11px" width="12" height="17" viewBox="0 0 12 17"><path d="M0 6.500h12L6 0z" fill="#bdbdbd"/><path d="M0 9h12L6 16z" fill="#a9a9a9"/></svg>
      <svg style="left:399.500px;top:15px" width="19" height="19" viewBox="0 0 19 19"><circle cx="9.500" cy="9.500" r="9.300" fill="#1a7cf4"/><circle cx="9.500" cy="4.800" r="1.700" fill="#fff"/><rect x="8" y="7.800" width="3" height="7.400" rx=".6" fill="#fff"/></svg><span class="th" style="left:425px">轻工业企业主营业务收入(亿元)</span><svg style="left:674.500px;top:11px" width="12" height="17" viewBox="0 0 12 17"><path d="M0 6.500h12L6 0z" fill="#bdbdbd"/><path d="M0 9h12L6 16z" fill="#a9a9a9"/></svg>
      <svg style="left:714.500px;top:15px" width="19" height="19" viewBox="0 0 19 19"><circle cx="9.500" cy="9.500" r="9.300" fill="#1a7cf4"/><circle cx="9.500" cy="4.800" r="1.700" fill="#fff"/><rect x="8" y="7.800" width="3" height="7.400" rx=".6" fill="#fff"/></svg><span class="th" style="left:740.500px">重工业企业主营业务收入(亿元)</span><svg style="left:989.500px;top:11px" width="12" height="17" viewBox="0 0 12 17"><path d="M0 6.500h12L6 0z" fill="#bdbdbd"/><path d="M0 9h12L6 16z" fill="#a9a9a9"/></svg>
      <svg style="left:1029.500px;top:15px" width="19" height="19" viewBox="0 0 19 19"><circle cx="9.500" cy="9.500" r="9.300" fill="#1a7cf4"/><circle cx="9.500" cy="4.800" r="1.700" fill="#fff"/><rect x="8" y="7.800" width="3" height="7.400" rx=".6" fill="#fff"/></svg>
    </div>
    <div class="row" style="top:105px"><span class="c0">2018年</span><span class="c1">1057327.30</span><span class="c2"></span><span class="c3"></span></div>
    <div class="row" style="top:150px"><span class="c0">2017年</span><span class="c1">1133160.76</span><span class="c2">338732.90</span><span class="c3">794427.86</span></div>
    <div class="row" style="top:195px"><span class="c0">2016年</span><span class="c1">1158998.52</span><span class="c2">363320.46</span><span class="c3">795678.06</span></div>
    <div class="row" style="top:240px"><span class="c0">2015年</span><span class="c1">1109852.97</span><span class="c2">343012.77</span><span class="c3">766840.20</span></div>
    <div class="row" style="top:285px"><span class="c0">2014年</span><span class="c1">1107032.52</span><span class="c2">326378.03</span><span class="c3">780654.49</span></div>
    <div class="row" style="top:330px"><span class="c0">2013年</span><span class="c1">1038659.45</span><span class="c2">301863.69</span><span class="c3">736795.77</span></div>
  </div>
</div>

<!-- page scrollbar -->
<div class="abs" style="left:1895px;top:107px;width:25px;height:913px;background:#f1f1f1">
  <svg style="left:7px;top:10px" width="11" height="6"><path d="M0 6h11L5.500 0z" fill="#a3a3a3"/></svg>
  <div class="abs" style="left:1.500px;top:25px;width:22px;height:316px;background:#c1c1c1"></div>
  <svg style="left:7px;top:897px" width="11" height="6"><path d="M0 0h11L5.500 6z" fill="#505050"/></svg>
</div>
<!-- floating widget -->
<div class="abs" style="left:1905px;top:652px;width:16px;height:89px;background:#4a5061;border-radius:5px 0 0 5px;border:1px solid #333844;border-right:0"></div>
<div class="abs" style="left:1911px;top:663px;width:7px;height:24px;background:#343a48"></div>
<div class="abs" style="left:1911px;top:689px;width:7px;height:42px;background:linear-gradient(#e0d23c,#b8d252 40%,#7fcf86 70%,#4fc9b4)"></div>
<div class="abs" style="left:1911px;top:663px;width:7px;height:69px;background:repeating-linear-gradient(transparent 0 2px,#4a5061 2px 3px)"></div>
</body>
</html>
